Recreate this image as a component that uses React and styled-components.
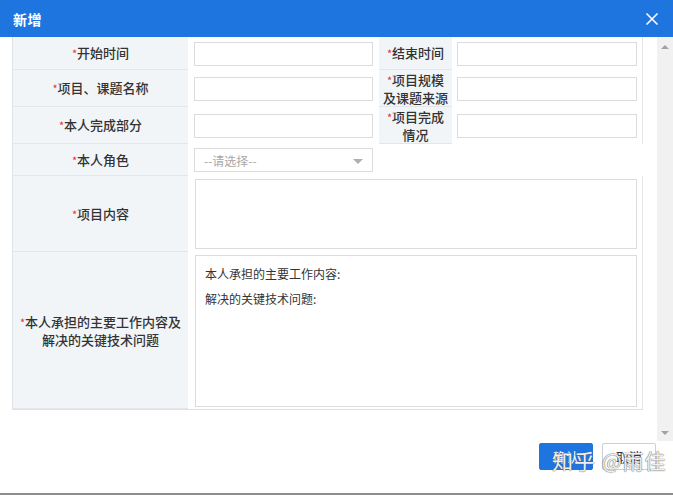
import React from 'react';
import styled, { createGlobalStyle } from 'styled-components';

const Global = createGlobalStyle`
  html, body { margin: 0; padding: 0; background: #fff; }
  body { font-family: "Noto Sans CJK SC", "Microsoft YaHei", sans-serif; color: #333; }
  * { box-sizing: border-box; }
`;

const Dialog = styled.div`
  position: relative;
  width: 673px;
  height: 495px;
  display: flex;
  flex-direction: column;
  background: #fff;
  border-bottom: 2px solid #8c8c8c;
`;

const Header = styled.div`
  flex: none;
  height: 37px;
  background: #1f75e0;
  color: #fff;
  display: flex;
  align-items: center;
  justify-content: space-between;
  padding: 0 14px 0 13px;
`;

const Title = styled.div`
  font-size: 14px;
  font-weight: bold;
  letter-spacing: 0.5px;
`;

const CloseBtn = styled.button`
  border: 0;
  background: transparent;
  padding: 0;
  width: 14px;
  height: 14px;
  display: flex;
  cursor: pointer;
`;

const Body = styled.div`
  flex: none;
  height: 404px;
  display: flex;
`;

const Content = styled.div`
  flex: 1;
  overflow: hidden;
  padding: 0 0 0 12px;
`;

const Rail = styled.div`
  flex: none;
  width: 16px;
  background: #f1f1f1;
  display: flex;
  flex-direction: column;
  justify-content: space-between;
  align-items: center;
  padding: 8px 0 6px;
`;

const Arrow = styled.span`
  width: 0;
  height: 0;
  border-left: 4px solid transparent;
  border-right: 4px solid transparent;
  ${p => (p.down ? 'border-top: 4px solid #a3a3a3;' : 'border-bottom: 4px solid #a3a3a3;')}
`;

const Table = styled.div`
  width: 631px;
  display: grid;
  grid-template-columns: 176px 191px 73px 191px;
  grid-template-rows: 33px 37px 37px 32px 76px 157px;
  border-bottom: 1px solid #dcdfe3;
`;

const Label = styled.div`
  background: #f2f5f8;
  border-bottom: 1px solid #e3e7eb;
  border-left: ${p => (p.first ? '1px solid #dfe3e7' : '0')};
  display: flex;
  align-items: center;
  justify-content: center;
  text-align: center;
  font-size: 13px;
  font-weight: 500;
  line-height: 17px;
  color: #333;
  padding: 0 2px;
`;

const Star = styled.span`
  color: #e0303a;
  font-size: 11px;
  font-weight: 400;
`;

const Cell = styled.div`
  grid-column: ${p => p.span || 'auto'};
  display: flex;
  align-items: ${p => (p.top ? 'flex-start' : 'center')};
  padding: ${p => p.pad || '0 6px'};
  border-right: ${p => (p.last ? '1px solid #e3e7eb' : '0')};
  background: #fff;
`;

const Input = styled.input`
  width: 100%;
  height: 24px;
  border: 1px solid #dcdcdc;
  background: #fff;
  outline: none;
  font: inherit;
  font-size: 12px;
`;

const Select = styled.div`
  position: relative;
  width: 100%;
  height: 24px;
  border: 1px solid #dcdcdc;
  display: flex;
  align-items: center;
  padding-left: 9px;
  font-size: 12px;
  color: #a8a8a8;
`;

const Caret = styled.span`
  position: absolute;
  right: 9px;
  top: 10px;
  width: 0;
  height: 0;
  border-left: 5px solid transparent;
  border-right: 5px solid transparent;
  border-top: 5px solid #b0b0b0;
`;

const Area = styled.div`
  width: 100%;
  height: ${p => p.h}px;
  border: 1px solid #dcdcdc;
  padding: 5px 9px;
  font-size: 12px;
  line-height: 25px;
  color: #333;
`;

const Footer = styled.div`
  flex: 1;
  display: flex;
  justify-content: flex-end;
  align-items: flex-start;
  gap: 9px;
  padding: 2px 17px 0 0;
`;

const Button = styled.button`
  width: 54px;
  height: 27px;
  border-radius: 2px;
  font-family: inherit;
  font-size: 13px;
  cursor: pointer;
  border: 1px solid ${p => (p.primary ? '#1f75e0' : '#cfcfcf')};
  background: ${p => (p.primary ? '#1f75e0' : '#fff')};
  color: ${p => (p.primary ? '#fff' : '#333')};
`;

const Watermark = styled.div`
  position: absolute;
  left: 552px;
  top: 445px;
  font-size: 21px;
  color: rgba(255, 255, 255, 0.92);
  text-shadow: 0 0 1px #555, 0 0 1px #777;
  pointer-events: none;
  white-space: nowrap;
  letter-spacing: 1px;
`;

const L = ({ children, ...rest }) => (
  <Label {...rest}>
    <div>
      <Star>*</Star>
      {children}
    </div>
  </Label>
);

export default function App() {
  return (
    <>
      <Global />
      <Dialog>
        <Header>
          <Title>新增</Title>
          <CloseBtn aria-label="关闭">
            <svg width="14" height="14" viewBox="0 0 14 14">
              <path d="M1.5 1.5 L12.5 12.5 M12.5 1.5 L1.5 12.5" stroke="#fff" strokeWidth="1.6" />
            </svg>
          </CloseBtn>
        </Header>
        <Body>
          <Content>
            <Table>
              <L first>开始时间</L>
              <Cell><Input /></Cell>
              <L>结束时间</L>
              <Cell last pad="0 5px 0 5px"><Input /></Cell>

              <L first>项目、课题名称</L>
              <Cell><Input /></Cell>
              <L>项目规模<br />及课题来源</L>
              <Cell last pad="0 5px 0 5px"><Input /></Cell>

              <L first>本人完成部分</L>
              <Cell><Input /></Cell>
              <L>项目完成<br />情况</L>
              <Cell last pad="0 5px 0 5px"><Input /></Cell>

              <L first>本人角色</L>
              <Cell>
                <Select>--请选择--<Caret /></Select>
              </Cell>
              <Cell span="3 / 5" />

              <L first>项目内容</L>
              <Cell span="2 / 5" last pad="3px 5px 0 7px" top>
                <Area h={70} />
              </Cell>

              <L first>本人承担的主要工作内容及<br />解决的关键技术问题</L>
              <Cell span="2 / 5" last pad="3px 5px 0 7px" top>
                <Area h={152}>
                  <div>本人承担的主要工作内容:</div>
                  <div>解决的关键技术问题:</div>
                </Area>
              </Cell>
            </Table>
          </Content>
          <Rail>
            <Arrow />
            <Arrow down />
          </Rail>
        </Body>
        <Footer>
          <Button primary>确认</Button>
          <Button>取消</Button>
        </Footer>
        <Watermark>知乎 @雨佳</Watermark>
      </Dialog>
    </>
  );
}
